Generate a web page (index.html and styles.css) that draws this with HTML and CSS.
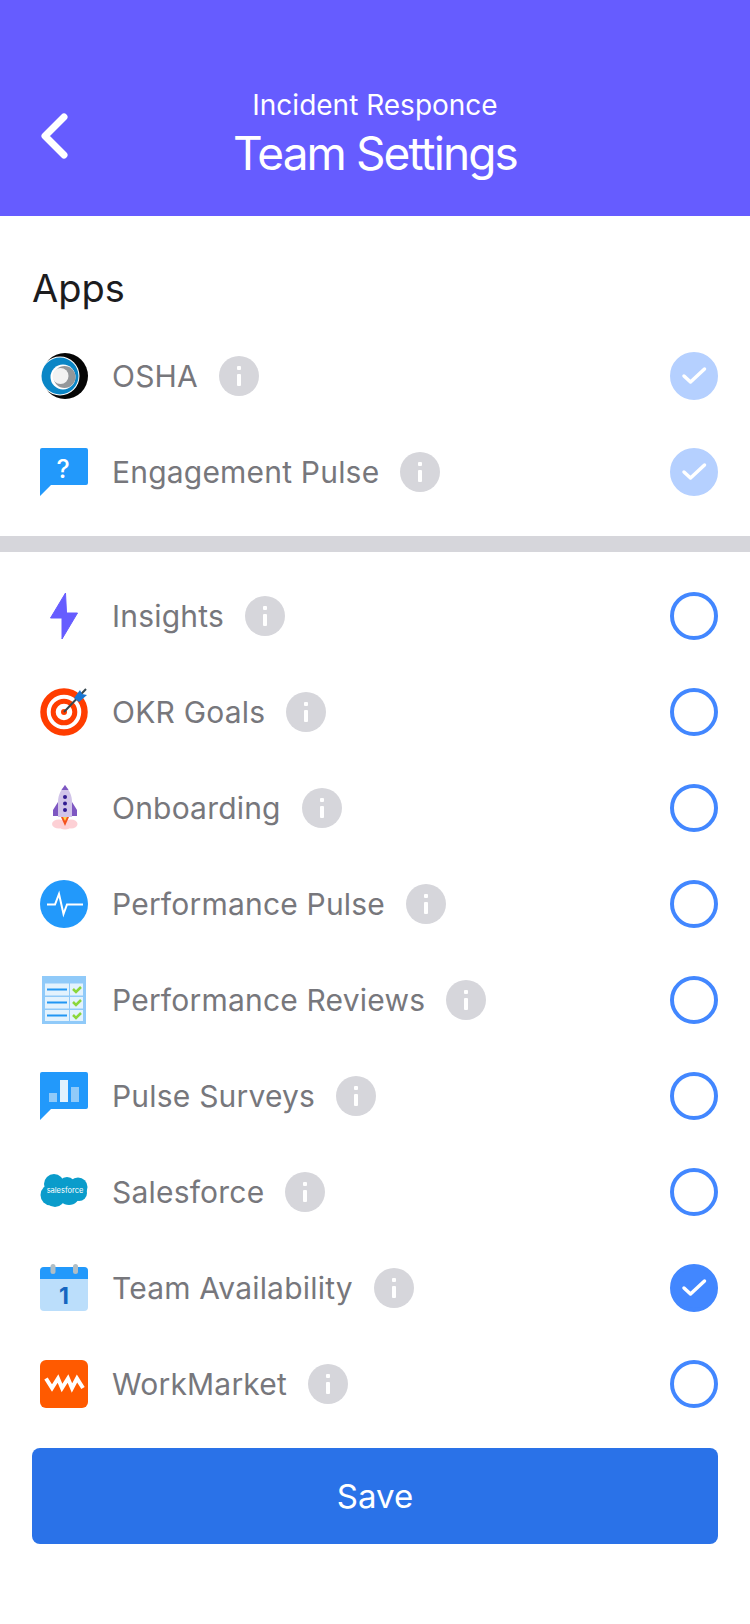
FILE: index.html
```html
<!DOCTYPE html>
<html>
<head>
	<meta charset="UTF-8">
	<title>Team Settings</title>
	<link rel="stylesheet" href="styles.css">
</head>
<body>
<div class="header">
	<a class="back" href="javascript:;"><svg width="32" height="48" viewBox="0 0 32 48"><path d="M26 5 L7 24 L26 43" fill="none" stroke="#fff" stroke-width="7" stroke-linecap="round" stroke-linejoin="round"/></svg></a>
	<div class="sub">Incident Responce</div>
	<div class="title">Team Settings</div>
</div>
<div class="section">
	<h2>Apps</h2>
	<div class="row"><div class="icon"><svg width="48" height="48" viewBox="0 0 48 48"><circle cx="25" cy="24" r="23" fill="#050505"/><circle cx="20" cy="24" r="19.5" fill="#fff"/><circle cx="20" cy="24" r="18.5" fill="#0b86c6"/><circle cx="23" cy="25" r="12.5" fill="#fff"/><circle cx="24.5" cy="25" r="11" fill="#94979a"/><circle cx="20.5" cy="24" r="8" fill="#f2f2f2"/></svg></div><span class="name">OSHA</span><span class="info"></span><span class="check on-light"><svg width="28" height="22" viewBox="0 0 28 22"><path d="M4 11 L10.5 17 L24.5 4" fill="none" stroke="#fff" stroke-width="3.5" stroke-linecap="round" stroke-linejoin="round"/></svg></span></div>
	<div class="row"><div class="icon"><svg width="48" height="48" viewBox="0 0 48 48"><path d="M2 0 H46 a2 2 0 0 1 2 2 V35 a2 2 0 0 1 -2 2 H11 L0 48 V2 a2 2 0 0 1 2 -2z" fill="#2299fb"/><text x="23" y="30" class="q">?</text></svg></div><span class="name">Engagement Pulse</span><span class="info"></span><span class="check on-light"><svg width="28" height="22" viewBox="0 0 28 22"><path d="M4 11 L10.5 17 L24.5 4" fill="none" stroke="#fff" stroke-width="3.5" stroke-linecap="round" stroke-linejoin="round"/></svg></span></div>
</div>
<div class="divider"></div>
<div class="section list">
	<div class="row"><div class="icon"><svg width="48" height="48" viewBox="0 0 48 48"><path d="M25.500 1 L10.500 26 H22 V47 L37.500 21 H26.500z" fill="#665cff" stroke="#665cff" stroke-linejoin="round"/></svg></div><span class="name">Insights</span><span class="info"></span><span class="check"></span></div>
	<div class="row"><div class="icon"><svg width="48" height="48" viewBox="0 0 48 48"><circle cx="24" cy="24" r="20.500" fill="none" stroke="#ff3d00" stroke-width="6.500"/><circle cx="24" cy="24" r="10.800" fill="none" stroke="#ff3d00" stroke-width="5"/><circle cx="24" cy="24" r="3" fill="#ff3d00"/><path d="M24 24 L46 1" stroke="#37474f" stroke-width="2"/><path d="M34 10 L40 2 L42 6 L47 7 L39 14z" fill="#1976d2"/></svg></div><span class="name">OKR Goals</span><span class="info"></span><span class="check"></span></div>
	<div class="row"><div class="icon"><svg width="48" height="48" viewBox="0 0 48 48"><ellipse cx="19" cy="40" rx="7" ry="4.500" fill="#fdd0d5"/><ellipse cx="31" cy="40" rx="6.500" ry="4.500" fill="#fdd0d5"/><ellipse cx="25" cy="41.500" rx="6" ry="4" fill="#fdd0d5"/><path d="M25 1 C29 6 32 11 32 18 V33 H18 V18 C18 11 21 6 25 1z" fill="#d1c4e9"/><path d="M25 1 L28.500 6 H21.500z" fill="#7e57c2"/><path d="M18 18 L13 26 V32 H18z M32 18 L37 26 V32 H32z" fill="#7e57c2"/><circle cx="25" cy="13" r="2" fill="#311b92"/><circle cx="25" cy="19.500" r="2" fill="#311b92"/><circle cx="25" cy="26" r="2" fill="#311b92"/><path d="M21 33 H29 L25 42z" fill="#f4511e"/><path d="M23 33 H27 L25 37z" fill="#ffd54f"/></svg></div><span class="name">Onboarding</span><span class="info"></span><span class="check"></span></div>
	<div class="row"><div class="icon"><svg width="48" height="48" viewBox="0 0 48 48"><circle cx="24" cy="24" r="24" fill="#2299fb"/><path d="M7 24.500 H15 L19 14 L23.500 34 L27 24.500 H43" fill="none" stroke="#fff" stroke-width="2"/></svg></div><span class="name">Performance Pulse</span><span class="info"></span><span class="check"></span></div>
	<div class="row"><div class="icon"><svg width="48" height="48" viewBox="0 0 48 48"><rect x="2" y="0" width="44" height="48" fill="#90caf9"/><rect x="5" y="7.500" width="24" height="12" fill="#e3f2fd"/><rect x="5" y="21" width="24" height="11.500" fill="#e3f2fd"/><rect x="5" y="34" width="24" height="11" fill="#e3f2fd"/><rect x="30" y="7.500" width="13" height="12" fill="#e3f2fd"/><rect x="30" y="21" width="13" height="11.500" fill="#e3f2fd"/><rect x="30" y="34" width="13" height="11" fill="#e3f2fd"/><path d="M7 13.500 H27 M7 26.500 H27 M7 39.500 H27" stroke="#2196f3" stroke-width="2"/><path d="M33 13 L36 16 L41 11 M33 26 L36 29 L41 24 M33 39 L36 42 L41 37" fill="none" stroke="#8bd63a" stroke-width="2.500"/></svg></div><span class="name">Performance Reviews</span><span class="info"></span><span class="check"></span></div>
	<div class="row"><div class="icon"><svg width="48" height="48" viewBox="0 0 48 48"><path d="M2 0 H46 a2 2 0 0 1 2 2 V35 a2 2 0 0 1 -2 2 H11 L0 48 V2 a2 2 0 0 1 2 -2z" fill="#2299fb"/><rect x="9" y="21" width="8" height="9" fill="#90caf9"/><rect x="20" y="8" width="8" height="22" fill="#e3f2fd"/><rect x="31" y="15" width="8" height="15" fill="#90caf9"/></svg></div><span class="name">Pulse Surveys</span><span class="info"></span><span class="check"></span></div>
	<div class="row"><div class="icon"><svg width="48" height="48" viewBox="0 0 48 48"><g fill="#0a9ccb"><circle cx="14" cy="16" r="10"/><circle cx="27" cy="18" r="9"/><circle cx="38" cy="19" r="9.500"/><circle cx="11" cy="27" r="10.500"/><circle cx="15" cy="29" r="10"/><circle cx="29" cy="26" r="11"/><circle cx="39" cy="25" r="8"/></g><text x="25" y="25" class="sf">salesforce</text></svg></div><span class="name">Salesforce</span><span class="info"></span><span class="check"></span></div>
	<div class="row"><div class="icon"><svg width="48" height="48" viewBox="0 0 48 48"><rect x="0" y="3" width="48" height="44" rx="4" fill="#bbdefb"/><path d="M0 15 V7 a4 4 0 0 1 4 -4 H44 a4 4 0 0 1 4 4 V15z" fill="#2299fb"/><rect x="10.500" y="0" width="5" height="10" rx="2.500" fill="#b0bec5"/><rect x="33" y="0" width="5" height="10" rx="2.500" fill="#b0bec5"/><text x="24" y="40" class="cal">1</text></svg></div><span class="name">Team Availability</span><span class="info"></span><span class="check on"><svg width="28" height="22" viewBox="0 0 28 22"><path d="M4 11 L10.5 17 L24.5 4" fill="none" stroke="#fff" stroke-width="3.5" stroke-linecap="round" stroke-linejoin="round"/></svg></span></div>
	<div class="row"><div class="icon"><svg width="48" height="48" viewBox="0 0 48 48"><rect width="48" height="48" rx="6" fill="#ff5a00"/><path d="M6 18.500 L12 28 L18 18.500 L22 28 L28 18.500 L32 28 L37 18.500 L43 28" fill="none" stroke="#fff" stroke-width="4"/></svg></div><span class="name">WorkMarket</span><span class="info"></span><span class="check"></span></div>
	<a class="save" href="javascript:;">Save</a>
</div>
</body>
</html>
```

FILE: styles.css
```css
*{
	box-sizing: border-box;
}
body{
	margin: 0;
	background-color: #fff;
	font-family: Inter, "Liberation Sans", sans-serif;
}
.header{
	height: 216px;
	padding-top: 89px;
	background-color: #665cff;
	color: #fff;
	text-align: center;
	position: relative;
}
.back{
	position: absolute;
	left: 38px;
	top: 112px;
}
.sub{
	font-size: 28px;
	line-height: 32px;
}
.title{
	margin-top: 5px;
	font-size: 46px;
	line-height: 54px;
	letter-spacing: -1.9px;
}
.section{
	padding: 0 32px;
}
h2{
	margin: 0 0 18px;
	padding-top: 50px;
	font-size: 38px;
	line-height: 44px;
	font-weight: 400;
	color: #1c1c1e;
}
.row{
	display: flex;
	align-items: center;
	height: 96px;
}
.icon{
	width: 48px;
	height: 48px;
	margin-left: 8px;
	margin-right: 24px;
}
.icon svg{
	display: block;
}
.name{
	font-size: 30px;
	letter-spacing: .2px;
	color: #77777c;
}
.info{
	width: 40px;
	height: 40px;
	margin-left: 21px;
	border-radius: 50%;
	background-color: #d6d6db;
	display: flex;
	flex-direction: column;
	align-items: center;
	justify-content: center;
	gap: 4px;
}
.info:before{
	content: "";
	width: 4px;
	height: 4px;
	border-radius: 1px;
	background-color: #fff;
}
.info:after{
	content: "";
	width: 4px;
	height: 12px;
	border-radius: 1px;
	background-color: #fff;
}
.check{
	width: 48px;
	height: 48px;
	margin-left: auto;
	border: 4px solid #4287ff;
	border-radius: 50%;
	display: flex;
	align-items: center;
	justify-content: center;
}
.on{
	background-color: #4287ff;
}
.on-light{
	background-color: #b5d0ff;
	border-color: #b5d0ff;
}
.divider{
	height: 16px;
	margin-top: 16px;
	background-color: #d6d6db;
}
.list{
	padding-top: 16px;
}
.save{
	display: block;
	height: 96px;
	margin-top: 16px;
	border-radius: 8px;
	background-color: #2a72e8;
	color: #fff;
	font-size: 33px;
	line-height: 96px;
	text-align: center;
	text-decoration: none;
}
.q{
	font-size: 25px;
	font-weight: 500;
	fill: #fff;
	text-anchor: middle;
}
.sf{
	font-size: 7.500px;
	fill: #fff;
	text-anchor: middle;
}
.cal{
	font-size: 23px;
	font-weight: 700;
	fill: #1565c0;
	text-anchor: middle;
}
```
